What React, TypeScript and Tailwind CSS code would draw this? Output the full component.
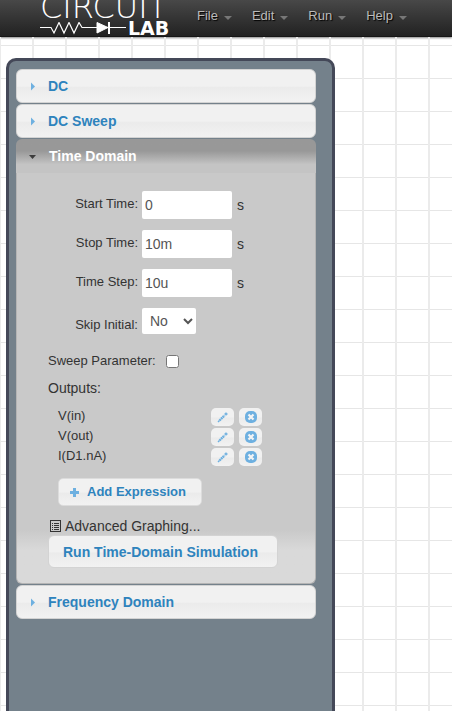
import { useState } from "react";
import type { ReactNode } from "react";

const glossy = "bg-linear-to-b from-[#f1f1f1] from-50% via-[#ebebeb] via-55% to-[#f2f2f2]";

const menus = ["File", "Edit", "Run", "Help"];

const fields = [
  { id: "start", label: "Start Time:", value: "0" },
  { id: "stop", label: "Stop Time:", value: "10m" },
  { id: "step", label: "Time Step:", value: "10u" },
];

const outputs = ["V(in)", "V(out)", "I(D1.nA)"];

function Logo() {
  return (
    <a href="#home" aria-label="CircuitLab" className="flex w-[136px] flex-col text-white">
      <span className="-mt-[4px] h-[23px] font-['DejaVu_Sans_Light','DejaVu_Sans'] text-[32px] leading-[23px] font-extralight">CIRCUIT</span>
      <span className="mt-[3px] flex h-[13px] items-center gap-px">
        <svg width="87" height="13" viewBox="0 0 87 13" fill="none" stroke="#fff" className="shrink-0">
          <path d="M0 5.5H11L14 11L19 0.5L24 11L29 0.5L34 11L39 0.5L42 5.5H86" strokeWidth="1.2" />
          <path d="M57 0.5V11L68 5.500Z" fill="#fff" />
          <path d="M69 0V12" strokeWidth="2" />
        </svg>
        <span className="font-['DejaVu_Sans'] text-[19px] leading-[13px] font-bold">LAB</span>
      </span>
    </a>
  );
}

function SectionHeader({ title, open = false, onClick }: { title: string; open?: boolean; onClick?: () => void }) {
  return (
    <button
      type="button"
      aria-expanded={open}
      onClick={onClick}
      className={
        open
          ? "flex h-[34px] w-full items-center gap-[12px] rounded-t-md bg-linear-to-b from-[#989898] from-35% to-[#c4c4c4] to-75% pl-[12px] text-left text-sm font-bold text-white"
          : `flex h-[34px] w-full items-center gap-[11px] rounded-md border border-[#d3d3d3] pl-[11px] text-left text-sm font-bold text-[#2e83bd] ${glossy}`
      }
    >
      <svg width="9" height="9" viewBox="0 0 9 9" className="shrink-0">
        {open ? <path d="M1 3H8L4.5 7Z" fill="#3c3c3c" /> : <path d="M3 0.5V8.5L7 4.5Z" fill="#6eb0e0" />}
      </svg>
      {title}
    </button>
  );
}

function IconButton({ label, children, onClick }: { label: string; children: ReactNode; onClick?: () => void }) {
  return (
    <button
      type="button"
      aria-label={label}
      onClick={onClick}
      className={`flex h-[18px] w-[23px] items-center justify-center rounded-[5px] ${glossy}`}
    >
      {children}
    </button>
  );
}

function TimeDomain() {
  const [items, setItems] = useState(outputs);
  return (
    <div className="flex flex-col items-start rounded-b-md border border-t-0 border-[#b4b4b4] bg-linear-to-b from-[#c9c9c9] from-87% to-[#d9d9d9] to-92% px-[31px] pt-[18px] pb-[15px]">
      <div className="flex flex-col gap-[11px]">
        {fields.map((f) => (
          <div key={f.id} className="flex items-center gap-1">
            <label htmlFor={f.id} className="w-[90px] pb-[2px] text-right text-[13px] leading-5">
              {f.label}
            </label>
            <input
              id={f.id}
              defaultValue={f.value}
              className="h-[28px] w-[90px] rounded-xs bg-white px-[3px] text-sm text-[#555]"
            />
            <span className="pl-px text-sm">s</span>
          </div>
        ))}
        <div className="flex items-center gap-1">
          <label htmlFor="skip" className="w-[90px] pt-2 text-right text-[13px] leading-4">
            Skip Initial:
          </label>
          <select id="skip" className="h-[26px] w-[54px] rounded-xs bg-white px-1 text-sm text-[#555]">
            <option>No</option>
            <option>Yes</option>
          </select>
        </div>
      </div>
      <div className="mt-[17px] flex h-[20px] items-center gap-[10px] text-[13px]">
        <label htmlFor="sweep">Sweep Parameter:</label>
        <input id="sweep" type="checkbox" className="size-[13px]" />
      </div>
      <div className="mt-[7px] text-sm leading-5">Outputs:</div>
      <ul className="mt-[9px] ml-[10px]">
        {items.map((name) => (
          <li key={name} className="flex h-5 items-center text-[13px]">
            <span className="w-[153px] pb-[2px]">{name}</span>
            <div className="flex gap-[5px]">
              <IconButton label={`Edit ${name}`}>
                <svg width="11" height="11" viewBox="0 0 11 11" fill="none" stroke="#6eb0e0">
                  <path d="M2.500 8.500L7.500 3.500" strokeWidth="2.400" strokeDasharray="1.800 0.400" />
                  <path d="M1 10L2.500 8.500" strokeWidth="1.500" />
                  <path d="M9 0.500V3.500M7.500 2H10.500" strokeWidth="1.300" />
                </svg>
              </IconButton>
              <IconButton label={`Remove ${name}`} onClick={() => setItems(items.filter((i) => i !== name))}>
                <svg width="12" height="12" viewBox="0 0 12 12">
                  <rect width="12" height="12" rx="5" fill="#6eb0e0" />
                  <path d="M3.500 3.500L8.500 8.500M8.500 3.500L3.500 8.500" stroke="#f4f4f4" strokeWidth="2.200" />
                </svg>
              </IconButton>
            </div>
          </li>
        ))}
      </ul>
      <button
        type="button"
        className={`mt-[11px] ml-[10px] flex h-[28px] items-center gap-[8px] rounded-[5px] border border-[#dcdcdc] pr-[15px] pl-[11px] text-[13px] font-bold text-[#2e83bd] ${glossy}`}
      >
        <svg width="9" height="9" viewBox="0 0 9 9">
          <path d="M4.500 0V9M0 4.500H9" stroke="#6eb0e0" strokeWidth="3" />
        </svg>
        Add Expression
      </button>
      <button type="button" className="mt-[10px] ml-[2px] flex h-[19px] items-center gap-1 text-sm">
        <svg width="11" height="12" viewBox="0 0 11 12" fill="none" stroke="#333">
          <rect x="0.500" y="0.500" width="10" height="11" />
          <path d="M2 3.500H3M4 3.500H9M2 5.500H3M4 5.500H9M2 7.500H3M4 7.500H9M2 9.500H3M4 9.500H9" />
        </svg>
        Advanced Graphing...
      </button>
      <button
        type="button"
        className={`h-[33px] rounded-md border border-[#d3d3d3] pr-[19px] pl-[14px] text-sm font-bold whitespace-nowrap text-[#2e83bd] ${glossy}`}
      >
        Run Time-Domain Simulation
      </button>
    </div>
  );
}

export default function App() {
  const [open, setOpen] = useState(true);
  return (
    <div className="flex h-screen flex-col overflow-hidden bg-white font-['Liberation_Sans',Arial,sans-serif] text-[#333]">
      <header className="flex h-[37px] shrink-0 border-b border-[#161616] bg-linear-to-b from-[#484848] to-[#222] pl-[40px] shadow-[0_1px_2px_#888]">
        <Logo />
        <nav className="ml-[21px] flex h-[31px] items-center gap-[20px]">
          {menus.map((m) => (
            <button key={m} type="button" className="flex items-center gap-[6px] text-[13px] text-[#bbb] [text-shadow:1px_1px_1px_#000]">
              {m}
              <svg width="8" height="4" viewBox="0 0 8 4" className="mt-[4px]">
                <path d="M0 0H8L4 4Z" fill="#777" />
              </svg>
            </button>
          ))}
        </nav>
      </header>
      <main className="flex flex-1 bg-[linear-gradient(90deg,#ebebeb_2px,transparent_2px),linear-gradient(#e6e6e6_1px,transparent_1px)] bg-size-[33px_33px] bg-position-[32px_8px] pt-[21px] pl-[6px]">
        <aside className="w-[329px] rounded-t-[10px] border-3 border-b-0 border-[#444858] bg-[#74818b] pt-[8px] pr-[16px] pl-[7px]">
          <div className="flex flex-col gap-px">
            <SectionHeader title="DC" />
            <SectionHeader title="DC Sweep" />
            <section>
              <SectionHeader title="Time Domain" open={open} onClick={() => setOpen(!open)} />
              {open && <TimeDomain />}
            </section>
            <SectionHeader title="Frequency Domain" />
          </div>
        </aside>
      </main>
    </div>
  );
}
